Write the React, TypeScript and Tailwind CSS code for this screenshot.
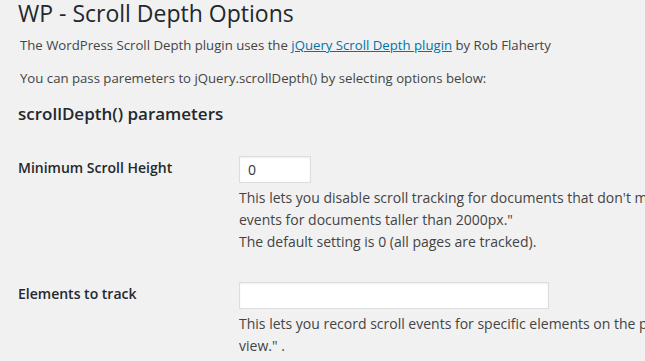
export default function App() {
  const rows = [
    {
      label: 'Minimum Scroll Height',
      value: '0',
      width: 'w-[72px]',
      lines: [
        "This lets you disable scroll tracking for documents that don't meet a minimum height. \"For example, a value of 2000 would only track",
        'events for documents taller than 2000px."',
        'The default setting is 0 (all pages are tracked).',
      ],
    },
    {
      label: 'Elements to track',
      value: '',
      width: 'w-[310px]',
      lines: [
        'This lets you record scroll events for specific elements on the page. "For example, an element to track when it scrolls into',
        'view." .',
        'You can track multiple elements using a comma-separated list, such as',
      ],
    },
  ];

  return (
    <div className="h-screen overflow-hidden bg-[#f1f1f1] pl-[18px] pt-[1px] font-['Open_Sans',sans-serif] text-[#444]">
      <h1 className="whitespace-nowrap text-[23px] leading-[24px] font-normal text-[#23282d]">WP - Scroll Depth Options</h1>
      <p className="ml-[2px] mt-[10px] whitespace-nowrap text-[13.2px] leading-[20px]">
        The WordPress Scroll Depth plugin uses the{' '}
        <a href="#" className="text-[#0073aa] underline">
          jQuery Scroll Depth plugin
        </a>{' '}
        by Rob Flaherty
      </p>
      <p className="ml-[2px] mt-[13px] whitespace-nowrap text-[13.2px] leading-[20px]">
        You can pass paremeters to jQuery.scrollDepth() by selecting options below:
      </p>
      <h2 className="mt-[15px] whitespace-nowrap text-[17px] leading-[22px] font-semibold text-[#23282d]">
        scrollDepth() parameters
      </h2>
      <div className="mt-[31px] flex flex-col gap-[29px]">
        {rows.map(row => (
          <div key={row.label} className="flex">
            <div className="w-[221px] shrink-0 pt-[2px] text-[14px] leading-[20px] font-semibold text-[#23282d]">{row.label}</div>
            <div className="min-w-0 flex-1">
              <input
                readOnly
                value={row.value}
                className={`${row.width} h-[27px] border border-[#ddd] bg-white px-[8px] text-[14px] text-[#32373c] shadow-[inset_0_1px_2px_rgba(0,0,0,0.07)] outline-none`}
              />
              <div className="mt-[4px] whitespace-nowrap text-[14px] leading-[22px]">
                {row.lines.map(line => (
                  <p key={line}>{line}</p>
                ))}
              </div>
            </div>
          </div>
        ))}
      </div>
    </div>
  );
}
